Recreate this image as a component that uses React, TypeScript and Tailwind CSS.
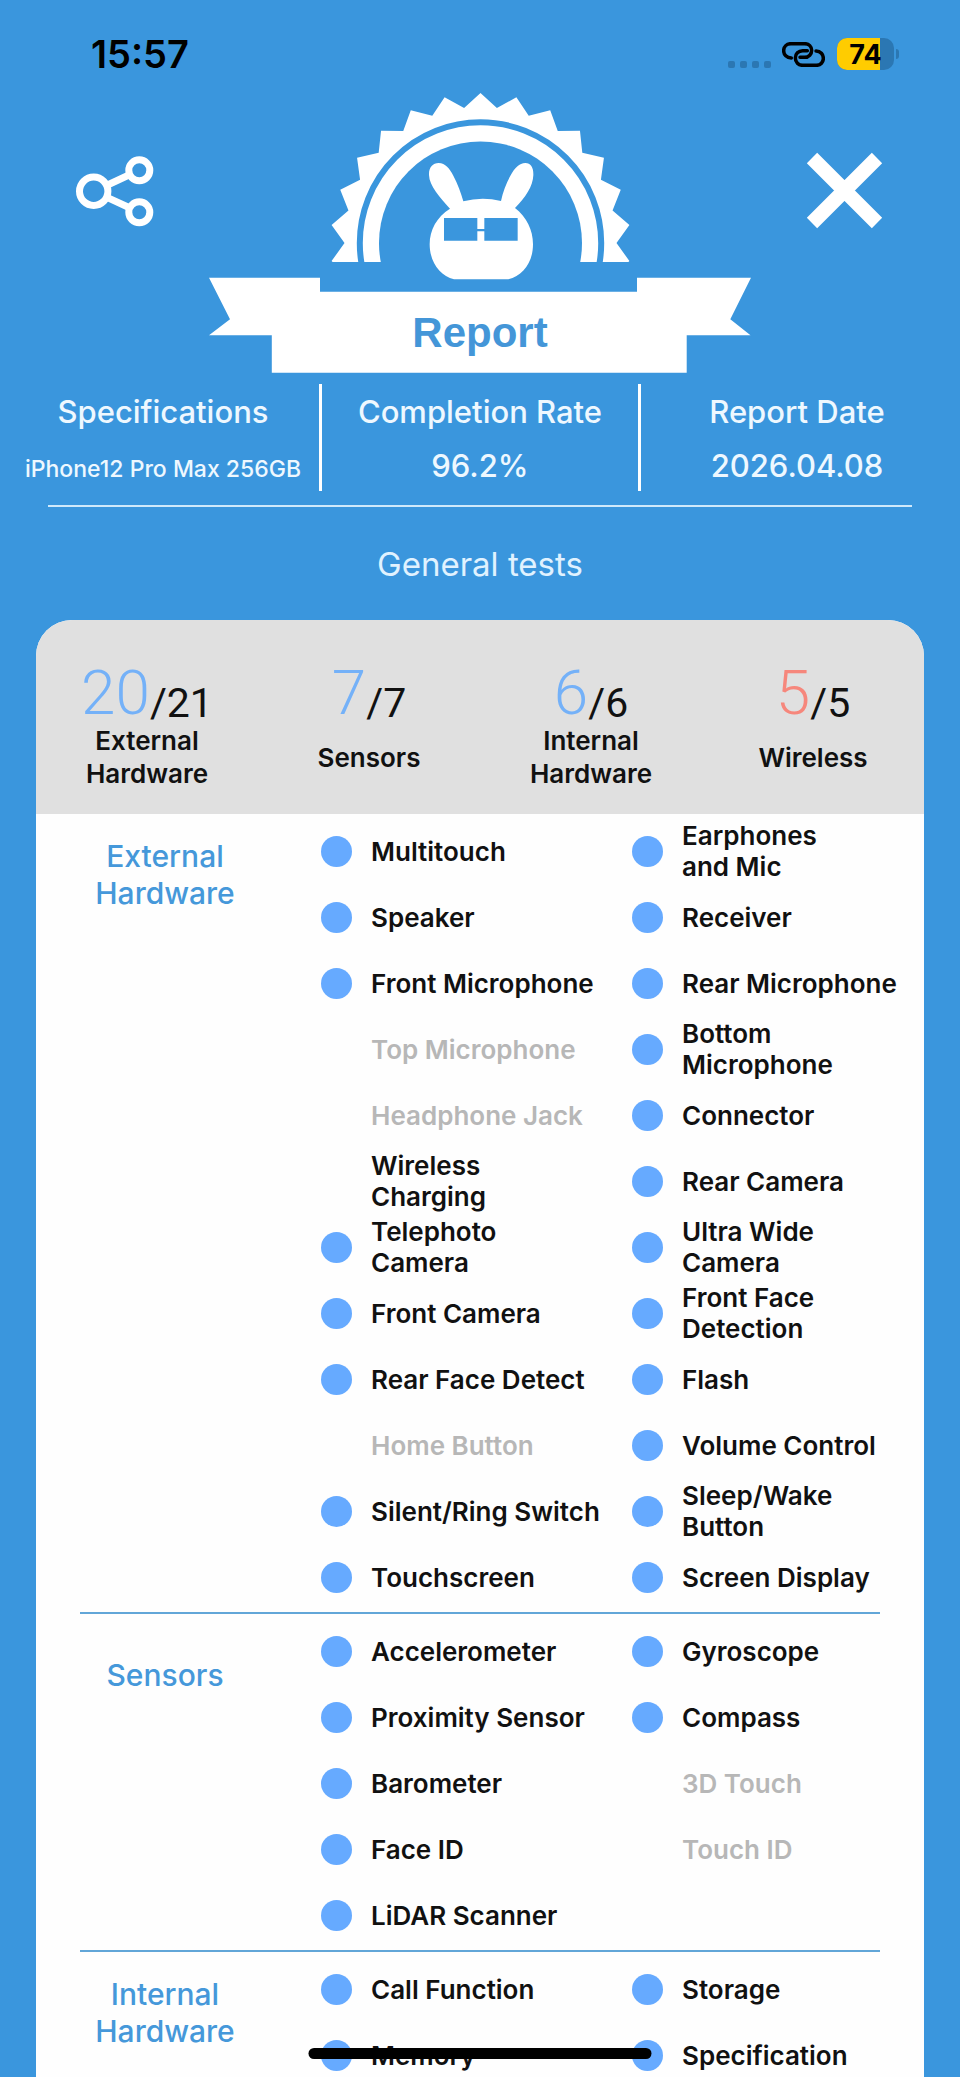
type TestItem = {
  name: string;
  status: "passed" | "skipped" | "unsupported";
};

type TestSection = {
  title: string;
  items: TestItem[];
};

const passed = (name: string): TestItem => ({ name, status: "passed" });
const skipped = (name: string): TestItem => ({ name, status: "skipped" });
const unsupported = (name: string): TestItem => ({
  name,
  status: "unsupported",
});

const summary = [
  { label: "External\nHardware", score: 20, total: 21, color: "text-[#74b1f8]" },
  { label: "Sensors", score: 7, total: 7, color: "text-[#74b1f8]" },
  { label: "Internal\nHardware", score: 6, total: 6, color: "text-[#74b1f8]" },
  { label: "Wireless", score: 5, total: 5, color: "text-[#f6877c]" },
];

const sections: TestSection[] = [
  {
    title: "External\nHardware",
    items: [
      passed("Multitouch"),
      passed("Earphones\nand Mic"),
      passed("Speaker"),
      passed("Receiver"),
      passed("Front Microphone"),
      passed("Rear Microphone"),
      unsupported("Top Microphone"),
      passed("Bottom\nMicrophone"),
      unsupported("Headphone Jack"),
      passed("Connector"),
      skipped("Wireless\nCharging"),
      passed("Rear Camera"),
      passed("Telephoto\nCamera"),
      passed("Ultra Wide\nCamera"),
      passed("Front Camera"),
      passed("Front Face\nDetection"),
      passed("Rear Face Detect"),
      passed("Flash"),
      unsupported("Home Button"),
      passed("Volume Control"),
      passed("Silent/Ring Switch"),
      passed("Sleep/Wake\nButton"),
      passed("Touchscreen"),
      passed("Screen Display"),
    ],
  },
  {
    title: "Sensors",
    items: [
      passed("Accelerometer"),
      passed("Gyroscope"),
      passed("Proximity Sensor"),
      passed("Compass"),
      passed("Barometer"),
      unsupported("3D Touch"),
      passed("Face ID"),
      unsupported("Touch ID"),
      passed("LiDAR Scanner"),
    ],
  },
  {
    title: "Internal\nHardware",
    items: [
      passed("Call Function"),
      passed("Storage"),
      passed("Memory"),
      passed("Specification"),
    ],
  },
];

// 26 teeth, tips and valleys alternate around the seal's centre
const sealPoints = Array.from({ length: 52 }, (_, i) => {
  const angle = (i * Math.PI) / 26;
  const radius = i % 2 === 0 ? 150 : 136;
  return `${480.5 + radius * Math.sin(angle)},${243 - radius * Math.cos(angle)}`;
}).join(" ");

function StatusBar() {
  return (
    <div className="flex h-[92px] items-center justify-between pt-4 pr-[61px] pl-[91px] text-black">
      <span className="text-[38px] leading-none font-semibold">15:57</span>
      <div className="flex items-center">
        <div className="mt-5 mr-[11px] flex gap-[5px]">
          {[0, 1, 2, 3].map((dot) => (
            <span key={dot} className="size-[7px] rounded-xs bg-[#2b77b3]" />
          ))}
        </div>
        <svg
          viewBox="0 0 129 75"
          className="mr-3 h-[25px] w-[43px] fill-none stroke-current"
          strokeWidth="10.5"
          strokeLinecap="round"
        >
          <path d="M28 48C14 48 5 38 5 26S14 5 27 5H68C81 5 89 14 89 25S81 46 68 46H54" />
          <path d="M76 26H62C49 26 40 36 40 48S49 70 62 70H103C116 70 124 60 124 49S116 27 102 27" />
        </svg>
        <div className="flex items-center gap-0.5">
          <div className="relative flex h-8 w-[57px] items-center justify-center overflow-hidden rounded-[10px] bg-[#2b77b3]">
            <span className="absolute inset-y-0 left-0 w-3/4 bg-[#ffcc00]" />
            <span className="relative text-[27px] leading-none font-bold">
              74
            </span>
          </div>
          <span className="h-2.5 w-[3px] rounded-r-full bg-[#2b77b3]" />
        </div>
      </div>
    </div>
  );
}

function ShareIcon() {
  return (
    <svg
      viewBox="76 152 78 78"
      className="size-[78px] fill-none stroke-white"
      strokeWidth="7"
    >
      <circle cx="93.7" cy="191.3" r="14.2" />
      <circle cx="139.3" cy="170.3" r="10.5" />
      <circle cx="139.3" cy="212.3" r="10.5" />
      <path d="M107 185.2 129.5 174.8M107 197.4 129.5 207.8" />
    </svg>
  );
}

function CloseIcon() {
  return (
    <svg
      viewBox="0 0 78 78"
      className="size-[78px] stroke-white"
      strokeWidth="14.6"
    >
      <path d="M6 6 71 71M71 6 6 71" />
    </svg>
  );
}

function Badge() {
  return (
    <div className="relative">
      <svg viewBox="209 92 542 283" className="h-[283px] w-[542px] fill-white">
        <defs>
          <clipPath id="seal-half">
            <rect x="320" y="90" width="322" height="172" />
          </clipPath>
        </defs>
        <g clipPath="url(#seal-half)">
          <polygon points={sealPoints} />
          <circle
            cx="480.5"
            cy="243"
            r="120.7"
            className="fill-none stroke-[#3a96dd]"
            strokeWidth="6"
          />
          <circle cx="480.5" cy="243" r="101.5" className="fill-[#3a96dd]" />
        </g>
        <g transform="translate(300 80) scale(.33333)">
          <path d="M450 386C420 352 388 318 387 285C386 262 398 249 416 249C436 249 449 266 460 287C473 312 483 338 490 364Q546 349 603 363C609 335 619 309 632 286C644 264 658 249 676 249C693 249 701 264 700 286C699 318 676 354 645 384C680 411 699 450 699 493C699 548 668 587 625 598H462C420 587 389 546 389 493C389 450 410 411 450 386Z" />
          <path
            d="M432 414H532V447H553V414H653V482H553V454H532V482H432Z"
            className="fill-[#3a96dd]"
          />
        </g>
        <path d="M209 277.7H320V291.7H637V277.7H751L730.3 319.3 750.5 335.3H686.7V372.7H271.8V335.3H209L230 319.3Z" />
      </svg>
      <h1 className="absolute inset-x-0 bottom-[18px] text-center font-['Liberation_Sans',Arial,sans-serif] text-[42px] leading-[48px] font-bold text-[#4496d8]">
        Report
      </h1>
    </div>
  );
}

function Header() {
  return (
    <header className="flex items-start justify-between px-[76px]">
      <button type="button" aria-label="Share" className="mt-[60px]">
        <ShareIcon />
      </button>
      <Badge />
      <button type="button" aria-label="Close" className="mt-[60px]">
        <CloseIcon />
      </button>
    </header>
  );
}

function Overview() {
  return (
    <dl className="mt-[9px] grid h-[107px] grid-cols-3 text-center text-[31px] leading-10 font-medium whitespace-nowrap text-[#eef8ff]">
      <div className="pt-2 pl-1.5">
        <dt>Specifications</dt>
        <dd className="mt-3.5">
          <span className="text-[23px]">iPhone12 Pro Max 256GB</span>
        </dd>
      </div>
      <div className="-mx-px border-x-3 border-white pt-2">
        <dt>Completion Rate</dt>
        <dd className="mt-3.5">96.2%</dd>
      </div>
      <div className="pt-2 pr-1.5">
        <dt>Report Date</dt>
        <dd className="mt-3.5">2026.04.08</dd>
      </div>
    </dl>
  );
}

function Summary() {
  return (
    <div className="grid grid-cols-4 bg-[#e0e0e0] pt-[42px] pb-6 text-center">
      {summary.map((group) => (
        <div key={group.label}>
          <p className="flex items-end justify-center font-[Roboto,sans-serif] leading-none">
            <span className={`text-[62px] leading-none font-light ${group.color}`}>
              {group.score}
            </span>
            <span className="text-[41px] leading-none text-[#111]">
              /{group.total}
            </span>
          </p>
          <p className="flex h-[66px] items-center justify-center text-[26px] leading-[33px] font-semibold whitespace-pre-line text-[#111]">
            {group.label}
          </p>
        </div>
      ))}
    </div>
  );
}

function ResultItem({ item }: { item: TestItem }) {
  return (
    <li className="flex h-[66px] items-center gap-[19px]">
      <span
        className={`size-[31px] shrink-0 rounded-full ${
          item.status === "passed" ? "bg-[#66aaff]" : ""
        }`}
      />
      <span
        className={`leading-[31px] whitespace-pre-line ${
          item.status === "unsupported" ? "text-[#b7b7b7]" : "text-[#111]"
        }`}
      >
        {item.name}
      </span>
    </li>
  );
}

function Section({ section }: { section: TestSection }) {
  return (
    <section className="grid grid-cols-[285fr_603fr] pt-1 pb-0.5">
      <div className="mt-5 mr-[27px] flex h-[74px] items-center justify-center">
        <h3 className="text-center text-[30px] leading-[37px] font-medium whitespace-pre-line text-[#4598da]">
          {section.title}
        </h3>
      </div>
      <ul className="grid grid-cols-[311fr_292fr] text-[26px] font-semibold">
        {section.items.map((item) => (
          <ResultItem key={item.name} item={item} />
        ))}
      </ul>
    </section>
  );
}

export default function App() {
  return (
    <div className="h-screen overflow-hidden bg-[#3a96dd] font-[Inter,sans-serif]">
      <StatusBar />
      <Header />
      <main>
        <Overview />
        <hr className="mx-12 mt-3.5 border-t-2 border-[#cfe9fb]" />
        <h2 className="mt-[33px] text-center text-[33px] leading-[48px] text-[#e0f2ff]">
          General tests
        </h2>
        <div className="mx-9 mt-8 overflow-hidden rounded-t-[36px] bg-[#fefefe]">
          <Summary />
          {sections.map((section, i) => (
            <div key={section.title}>
              {i > 0 && (
                <hr className="mx-11 border-t-2 border-[#62a6d8]" />
              )}
              <Section section={section} />
            </div>
          ))}
        </div>
      </main>
      <div className="fixed bottom-[18px] left-1/2 h-[11px] w-[343px] -translate-x-1/2 rounded-full bg-black" />
    </div>
  );
}
